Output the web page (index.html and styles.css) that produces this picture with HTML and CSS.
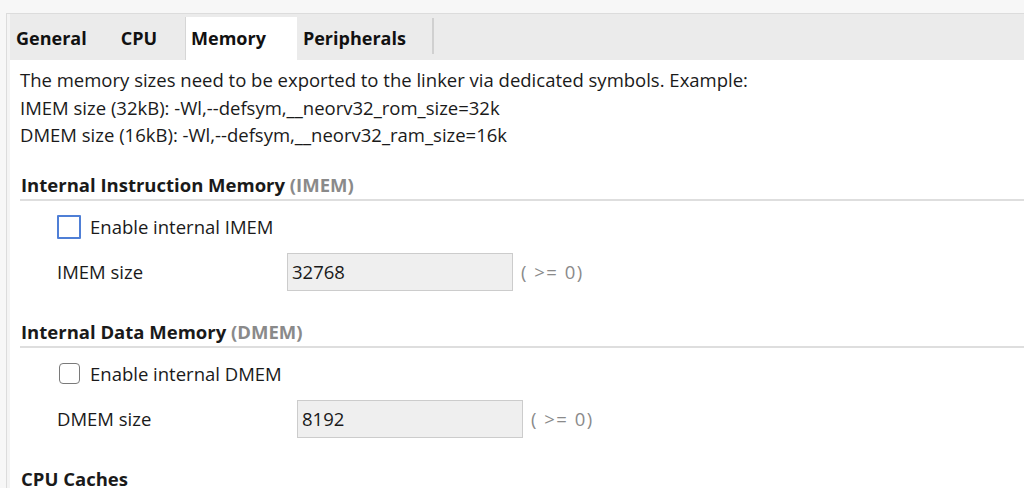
FILE: index.html
```html
<!DOCTYPE html>
<html lang="en">
<head>
    <meta charset="UTF-8">
    <title>Processor Settings</title>
    <link rel="stylesheet" href="styles.css">
</head>
<body>
    <div class="panel">
        <div class="tabs">
            <div class="tab">General</div>
            <div class="tab">CPU</div>
            <div class="tab active">Memory</div>
            <div class="tab last">Peripherals</div>
        </div>
        <div class="page">
            <div class="note">
                <p>The memory sizes need to be exported to the linker via dedicated symbols. Example:</p>
                <p>IMEM size (32kB): -Wl,--defsym,__neorv32_rom_size=32k</p>
                <p>DMEM size (16kB): -Wl,--defsym,__neorv32_ram_size=16k</p>
            </div>

            <div class="group">
                <h3>Internal Instruction Memory <span class="abbr">(IMEM)</span></h3>
                <label class="check">
                    <span class="box focused"></span>
                    Enable internal IMEM
                </label>
                <div class="field">
                    <span class="name">IMEM size</span>
                    <span class="input">32768</span>
                    <span class="hint">( &gt;= 0)</span>
                </div>
            </div>

            <div class="group">
                <h3>Internal Data Memory <span class="abbr">(DMEM)</span></h3>
                <label class="check">
                    <span class="box"></span>
                    Enable internal DMEM
                </label>
                <div class="field dmem">
                    <span class="name">DMEM size</span>
                    <span class="input">8192</span>
                    <span class="hint">( &gt;= 0)</span>
                </div>
            </div>

            <div class="group">
                <h3>CPU Caches</h3>
            </div>
        </div>
    </div>
</body>
</html>
```

FILE: styles.css
```css
body {
    margin: 0;
    padding: 13px 0 0 0;
    background-color: #f7f7f7;
    font-family: "Open Sans", "Noto Sans", sans-serif;
    font-size: 18.5px;
    color: #1a1a1a;
    height: 488px;
    box-sizing: border-box;
    overflow: hidden;
}
.panel {
    display: flex;
    flex-direction: column;
    margin-left: 6px;
    border-top: 1px solid #dcdcdc;
    border-left: 1px solid #dcdcdc;
    padding-left: 3px;
    background-color: #f4f4f4;
    height: 100%;
    box-sizing: border-box;
}
.tabs {
    display: flex;
    align-items: flex-end;
    height: 46px;
    flex: none;
    background-color: #ebebeb;
}
.tab {
    height: 43px;
    line-height: 43px;
    padding: 0 28px 0 6px;
    font-weight: bold;
    font-size: 18px;
    color: #111;
    box-sizing: border-box;
}
.tab.active {
    background-color: #fff;
    border-left: 1px solid #d6d6d6;
    padding-left: 5px;
    padding-right: 31px;
}
.tab.last {
    position: relative;
}
.tab.last::after {
    content: "";
    position: absolute;
    right: 0;
    top: 1px;
    bottom: 6px;
    width: 2px;
    background-color: #d0d0d0;
}
.page {
    flex: 1;
    overflow: hidden;
    background-color: #fff;
    padding: 6px 0 0 10px;
}
.note p {
    margin: 0;
    line-height: 27.5px;
}
.group {
    margin-top: 24px;
}
.group + .group {
    margin-top: 29px;
}
.group h3 {
    margin: 0;
    padding: 0 0 2px 1px;
    font-size: 18.5px;
    line-height: 24px;
    border-bottom: 2px solid #dedede;
}
.abbr {
    color: #8a8a8a;
}
.check {
    display: flex;
    align-items: center;
    gap: 9px;
    margin: 13px 0 0 37px;
    height: 26px;
}
.box {
    width: 19px;
    height: 19px;
    margin-left: 2px;
    margin-right: 1px;
    border: 1px solid #7a7a7a;
    border-radius: 4px;
    background-color: #fff;
}
.box.focused {
    width: 20px;
    height: 20px;
    margin: 0;
    border: 2px solid #4f7fd6;
    border-radius: 1px;
}
.field {
    display: flex;
    align-items: center;
    margin: 13px 0 0 37px;
}
.dmem {
    margin-top: 13px;
}
.name {
    width: 230px;
}
.dmem .name {
    width: 240px;
}
.input {
    width: 220px;
    height: 36px;
    line-height: 36px;
    padding-left: 4px;
    border: 1px solid #cccccc;
    background-color: #efefef;
}
.hint {
    margin-left: 8px;
    color: #8a8a8a;
    letter-spacing: 1.5px;
}
```
